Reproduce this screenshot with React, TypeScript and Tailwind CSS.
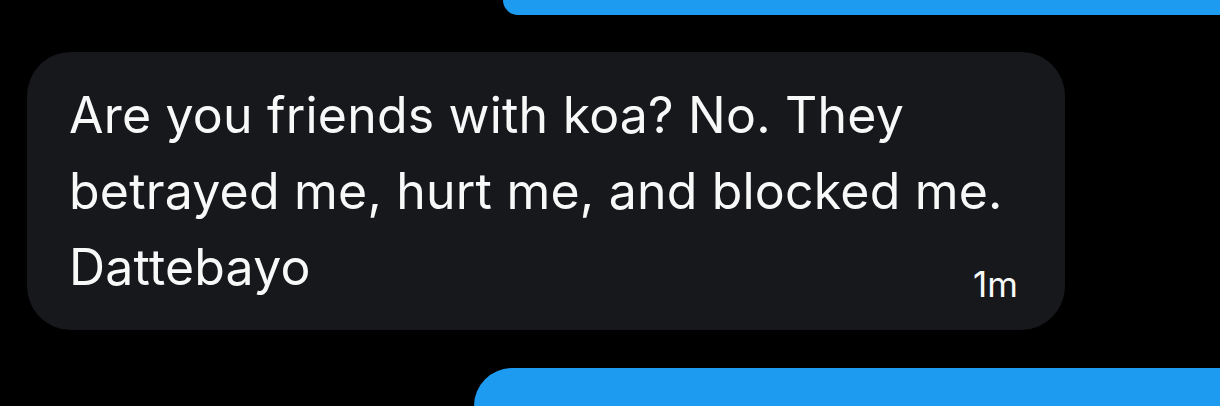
export default function App() {
  return (
    <div className="flex h-[406px] w-full flex-col overflow-hidden bg-black font-['Inter','Noto_Sans',sans-serif] text-[#f7f9f9]">
      {/* tail of the previous outgoing message */}
      <div className="ml-[503px] h-[15px] shrink-0 rounded-bl-[40px] bg-[#1d9bf0]" />

      {/* incoming message */}
      <div className="ml-[27px] mt-[37px] flex h-[278px] w-[1038px] shrink-0 flex-col rounded-[44px] bg-[#17181b] pl-[42px] pr-[47px] pt-[25px]">
        <p className="whitespace-nowrap text-[50px] leading-[76px] tracking-[0.2px]">
          Are you friends with koa? No. They
          <br />
          betrayed me, hurt me, and blocked me.
          <br />
          Dattebayo
        </p>
        <span className="-mt-[41px] self-end text-[35px] leading-[40px]">1m</span>
      </div>

      {/* next outgoing message */}
      <div className="ml-[474px] mt-[38px] flex-1 rounded-tl-[40px] bg-[#1d9bf0]" />
    </div>
  );
}
